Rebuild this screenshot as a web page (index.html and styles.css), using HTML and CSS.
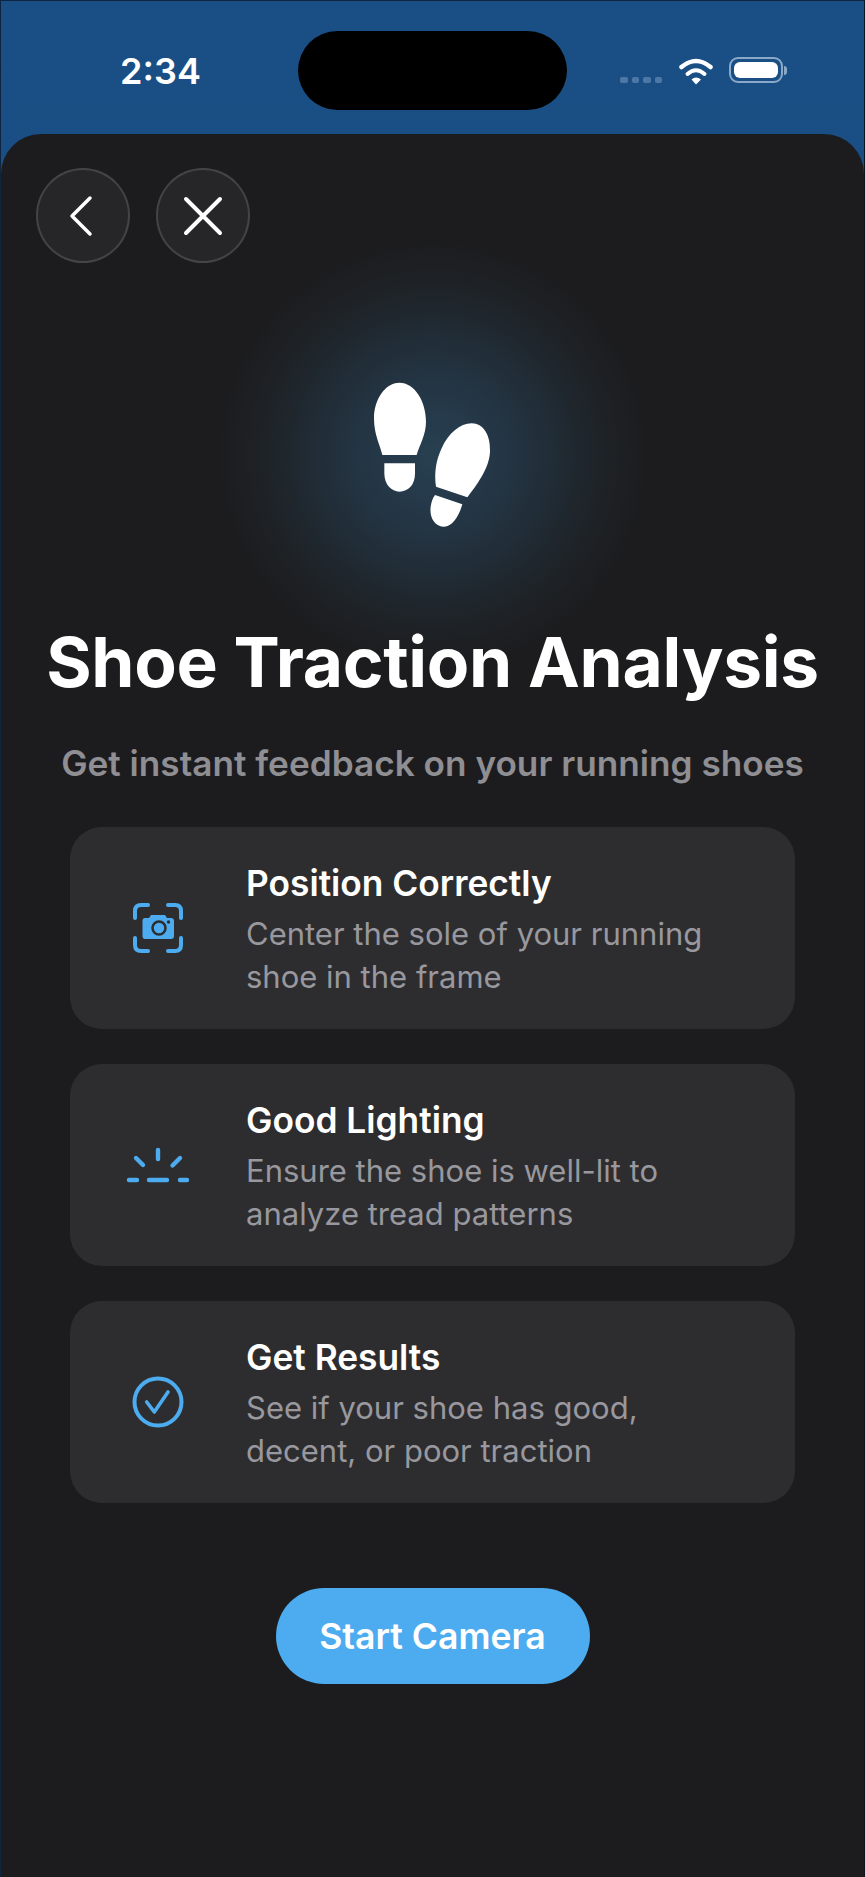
FILE: index.html
```html
<!DOCTYPE html>
<html lang="en">
<head>
  <meta charset="UTF-8">
  <meta name="viewport" content="width=device-width, initial-scale=1.0">
  <title>Shoe Traction Analysis</title>
  <link rel="stylesheet" href="styles.css">
</head>
<body>

<div class="status-bar">
  <span class="clock">2:34</span>
  <div class="island"></div>
  <div class="status-icons">
    <div class="signal"><i></i><i></i><i></i><i></i></div>
    <svg class="wifi" width="36" height="28" viewBox="0 0 36 28">
      <path d="M3.5 10Q18 -2 32.500 10" fill="none" stroke="#fff" stroke-width="4.500" stroke-linecap="round"/>
      <path d="M9.500 17Q18 9.500 26.500 17" fill="none" stroke="#fff" stroke-width="4" stroke-linecap="round"/>
      <path d="M13.500 22.500Q18 18.500 23 22.500L18 27.500Z" fill="#fff"/>
    </svg>
    <div class="battery"><div class="battery-level"></div></div>
    <div class="battery-cap"></div>
  </div>
</div>

<div class="sheet">
  <div class="nav-buttons">
    <button class="round-button back">
      <svg width="26" height="42" viewBox="0 0 26 42"><path d="M22 3L4 21L22 39" fill="none" stroke="#fff" stroke-width="3.500" stroke-linecap="round" stroke-linejoin="round"/></svg>
    </button>
    <button class="round-button">
      <svg width="40" height="40" viewBox="0 0 40 40"><path d="M3 3L37 37M37 3L3 37" fill="none" stroke="#fff" stroke-width="4" stroke-linecap="round"/></svg>
    </button>
  </div>

  <div class="hero">
    <svg class="shoes" width="200" height="180" viewBox="0 0 600 540">
      <path d="M208 68C255 68 288 125 288 185C288 225 268 255 260 285L157 285C150 255 132 225 132 175C132 120 165 68 208 68Z" fill="#fff"/>
      <path d="M163 310L255 310L255 340C255 375 235 395 208 395C185 395 163 375 163 340Z" fill="#fff"/>
      <path d="M425 190C460 190 482 225 480 275C478 325 440 375 412 412L318 380C312 340 318 300 335 265C355 220 390 190 425 190Z" fill="#fff"/>
      <path d="M315 405L397 433C388 465 368 502 340 500C312 498 298 470 302 440C304 425 308 415 315 405Z" fill="#fff"/>
    </svg>
  </div>

  <h1>Shoe Traction Analysis</h1>
  <p class="subtitle">Get instant feedback on your running shoes</p>

  <div class="cards">
    <div class="card">
      <div class="card-icon">
        <svg width="52" height="52" viewBox="0 0 52 52">
          <path d="M16 3H9Q3 3 3 9V16M36 3H43Q49 3 49 9V16M3 36V43Q3 49 9 49H16M49 36V43Q49 49 43 49H36" fill="none" stroke="#4dacf0" stroke-width="4" stroke-linecap="round"/>
          <path d="M13 16H17L19 13H33L35 16H39Q42 16 42 19V34Q42 37 39 37H13Q10.500 37 10.500 34V19Q10.500 16 13 16Z" fill="#4dacf0"/>
          <circle cx="27" cy="26" r="6.500" fill="none" stroke="#2d2d2f" stroke-width="2.500"/>
          <circle cx="36.500" cy="20" r="1.700" fill="#2d2d2f"/>
        </svg>
      </div>
      <div class="card-text">
        <h2>Position Correctly</h2>
        <p>Center the sole of your running shoe in the frame</p>
      </div>
    </div>
    <div class="card">
      <div class="card-icon">
        <svg width="64" height="36" viewBox="0 0 64 36">
          <path d="M32 3V12M10 11L17 18M54 11L46.500 18.500M3 33H11M23 33H41M54 33H61" fill="none" stroke="#4dacf0" stroke-width="4.400" stroke-linecap="round"/>
        </svg>
      </div>
      <div class="card-text">
        <h2>Good Lighting</h2>
        <p>Ensure the shoe is well-lit to analyze tread patterns</p>
      </div>
    </div>
    <div class="card">
      <div class="card-icon">
        <svg width="52" height="52" viewBox="0 0 52 52">
          <circle cx="26" cy="26" r="23.500" fill="none" stroke="#4dacf0" stroke-width="4"/>
          <path d="M14.700 26L22.300 36L36 16" fill="none" stroke="#4dacf0" stroke-width="3.600" stroke-linecap="round" stroke-linejoin="round"/>
        </svg>
      </div>
      <div class="card-text">
        <h2>Get Results</h2>
        <p>See if your shoe has good, decent, or poor traction</p>
      </div>
    </div>
  </div>

  <button class="start-button">Start Camera</button>
</div>

</body>
</html>
```

FILE: styles.css
```css
html, body {
  margin: 0;
  height: 1877px;
  overflow: hidden;
}
body {
  font-family: Inter, 'Liberation Sans', sans-serif;
  background: linear-gradient(#1a4f85, #174678);
  color: #fff;
  box-sizing: border-box;
  border-top: 1px solid #0e2440;
  border-left: 1px solid #0e2440;
  border-right: 1px solid #0e1420;
}
.status-bar {
  height: 133px;
  box-sizing: border-box;
  padding-top: 30px;
  display: flex;
  align-items: flex-start;
}
.clock {
  width: 297px;
  text-align: center;
  padding-left: 22px;
  box-sizing: border-box;
  font-size: 36px;
  font-weight: 600;
  line-height: 80px;
}
.island {
  width: 269px;
  height: 79px;
  background: #000;
  border-radius: 40px;
}
.status-icons {
  display: flex;
  align-items: center;
  margin-left: 53px;
  height: 80px;
}
.signal {
  display: flex;
  gap: 4px;
  margin-top: 18px;
  margin-right: 16px;
}
.signal i {
  width: 7.500px;
  height: 6.500px;
  border-radius: 2px;
  background: #4d78a6;
}
.wifi {
  margin-right: 15px;
}
.battery {
  width: 54px;
  height: 26px;
  box-sizing: border-box;
  border: 2px solid #8aa8c8;
  border-radius: 9px;
  padding: 3px;
  margin-top: -2px;
}
.battery-level {
  height: 100%;
  background: #fff;
  border-radius: 6px;
}
.battery-cap {
  width: 3px;
  height: 9px;
  margin-left: 1px;
  margin-top: -2px;
  background: #8aa8c8;
  border-radius: 0 3px 3px 0;
}
.sheet {
  height: 1743px;
  background: #1c1c1e;
  border-radius: 40px 40px 0 0;
  padding-top: 34px;
  box-sizing: border-box;
  display: flex;
  flex-direction: column;
  align-items: center;
}
.nav-buttons {
  align-self: flex-start;
  display: flex;
  gap: 26px;
  padding-left: 35px;
  position: relative;
  z-index: 1;
}
.round-button {
  width: 94px;
  height: 95px;
  padding: 0;
  border-radius: 50%;
  background: #262628;
  border: 2px solid #444446;
  display: flex;
  align-items: center;
  justify-content: center;
}
.back svg {
  margin-right: 4px;
}
.hero {
  width: 430px;
  height: 430px;
  margin-top: -23px;
  margin-bottom: -48px;
  display: flex;
  align-items: center;
  justify-content: center;
  background: radial-gradient(circle closest-side, #27404f 0%, #25394a 22%, #22303c 47%, #1f262c 70%, #1d1f22 90%, rgba(28, 28, 30, 0) 100%);
}
.shoes {
  margin-right: 5px;
  margin-bottom: 10px;
}
h1 {
  margin: 0;
  font-size: 69.400px;
  font-weight: 700;
  line-height: 80px;
  letter-spacing: -0.300px;
  position: relative;
}
.subtitle {
  margin: 0;
  margin-top: 39px;
  font-size: 35.200px;
  font-weight: 600;
  line-height: 44px;
  color: #8e8e93;
}
.cards {
  width: 725px;
  margin-top: 42px;
  display: flex;
  flex-direction: column;
  gap: 35px;
}
.card {
  height: 202px;
  background: #2d2d2f;
  border-radius: 32px;
  display: flex;
  align-items: center;
}
.card-icon {
  width: 176px;
  display: flex;
  justify-content: center;
}
.card-text {
  width: 490px;
  padding-top: 3px;
}
h2 {
  margin: 0;
  font-size: 35.300px;
  font-weight: 600;
  line-height: 44px;
}
.card-text p {
  margin: 0;
  margin-top: 6px;
  font-size: 31px;
  line-height: 43px;
  color: #98989e;
}
.start-button {
  width: 314px;
  height: 96px;
  margin-top: 85px;
  border: none;
  border-radius: 48px;
  background: #4dacf0;
  color: #fff;
  font-family: inherit;
  font-size: 35.600px;
  font-weight: 600;
}
```
